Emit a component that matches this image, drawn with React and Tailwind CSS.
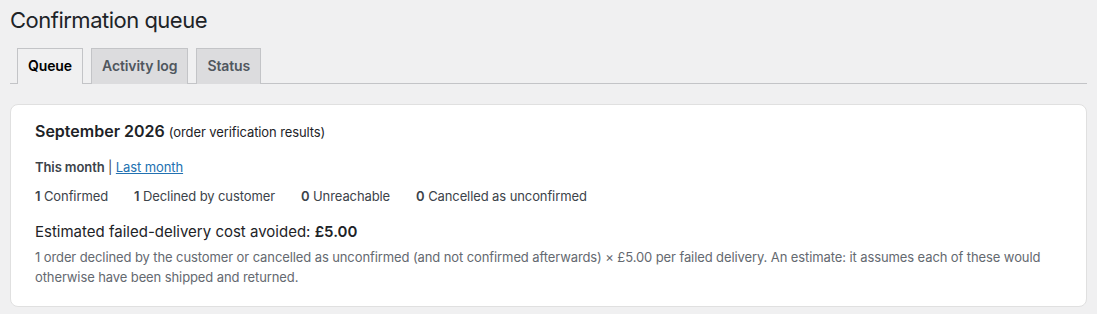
export default function App() {
    const stats = [
        { count: 1, label: "Confirmed" },
        { count: 1, label: "Declined by customer" },
        { count: 0, label: "Unreachable" },
        { count: 0, label: "Cancelled as unconfirmed" },
    ];

    const tabs = ["Queue", "Activity log", "Status"];

    return (
        <div className="min-h-screen bg-[#f0f0f1] px-[10px] pt-[5px] text-[#1d2327] font-['Inter',sans-serif] tracking-[-0.1px]">
            <h1 className="text-[22px] leading-[30px] font-normal tracking-[-0.5px]">Confirmation queue</h1>

            <nav className="mt-[13px] flex border-b border-[#c3c4c7] pl-[7px]">
                {tabs.map((tab, i) => (
                    <a
                        key={tab}
                        href="#"
                        className={`mr-[8px] -mb-px border border-[#c3c4c7] border-b-0 px-[10px] py-[5px] text-[14px] leading-[24px] font-semibold ${
                            i === 0
                                ? "bg-[#f0f0f1] text-black border-b border-b-[#f0f0f1] pb-[6px]"
                                : "bg-[#dcdcde] text-[#50575e]"
                        }`}
                    >
                        {tab}
                    </a>
                ))}
            </nav>

            <div className="mt-[20px] rounded-[8px] border border-[#e0e0e0] bg-white px-[24px] pt-[16px] pb-[19px]">
                <h2 className="text-[16px] leading-[20px] font-semibold tracking-normal">
                    September 2026 <span className="text-[13px] font-normal tracking-[-0.1px]">(order verification results)</span>
                </h2>

                <p className="mt-[15px] text-[13px] leading-[20px] text-[#3c434a]">
                    <strong className="font-semibold">This month</strong> |{" "}
                    <a href="#" className="text-[#2271b1] underline">Last month</a>
                </p>

                <div className="mt-[9px] flex gap-[26px] text-[13px] leading-[20px] text-[#3c434a]">
                    {stats.map((s) => (
                        <span key={s.label}>
                            <strong className="font-semibold">{s.count}</strong> {s.label}
                        </span>
                    ))}
                </div>

                <p className="mt-[16px] text-[15px] leading-[20px] text-[#1d2327] tracking-normal">
                    Estimated failed-delivery cost avoided: <strong className="font-semibold">£5.00</strong>
                </p>
                <p className="mt-[5px] text-[13px] leading-[20px] text-[#646970]">
                    1 order declined by the customer or cancelled as unconfirmed (and not confirmed afterwards) × £5.00 per failed delivery. An estimate: it assumes each of these would otherwise have been shipped and returned.
                </p>
            </div>
        </div>
    );
}
